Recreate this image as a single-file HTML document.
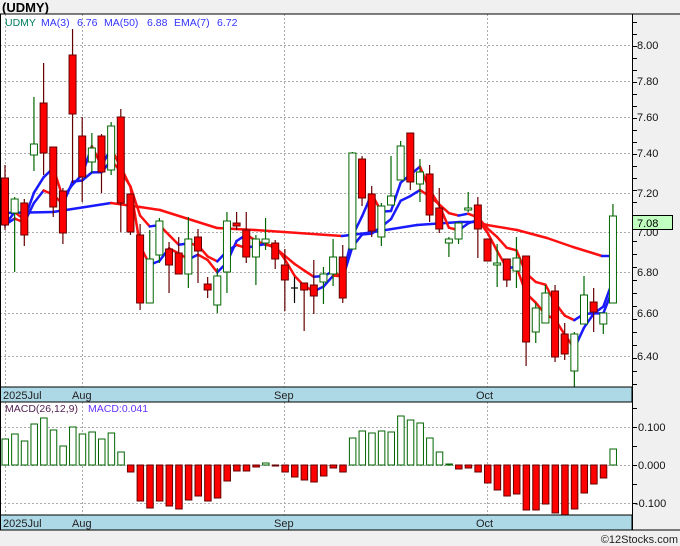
<!DOCTYPE html>
<html><head><meta charset="utf-8"><style>
html,body{margin:0;padding:0;background:#f0f0f0;width:680px;height:546px;overflow:hidden}
svg{display:block;font-family:"Liberation Sans",sans-serif}
</style></head><body>
<svg id="s" width="680" height="546" xmlns="http://www.w3.org/2000/svg">
<rect x="0" y="0" width="680" height="546" fill="#f0f0f0"/>
<rect x="0" y="14" width="632" height="516" fill="#fff"/>
<text x="2" y="12" font-size="13" font-weight="bold" fill="#000">(UDMY)</text>
<g id="grid"></g>
<g id="lines"></g>
<g id="candles"></g>
<g id="macd"></g>
<rect x="0" y="387" width="632" height="15" fill="#add8e6" stroke="#000" stroke-width="1"/>
<rect x="0" y="515" width="632" height="15" fill="#add8e6" stroke="#000" stroke-width="1"/>
<g font-size="11" fill="#222">
<text x="3" y="399">2025Jul</text><text x="72" y="399">Aug</text><text x="274" y="399">Sep</text><text x="476" y="399">Oct</text>
<text x="3" y="527">2025Jul</text><text x="72" y="527">Aug</text><text x="274" y="527">Sep</text><text x="476" y="527">Oct</text>
</g>
<line x1="0" y1="14" x2="680" y2="14" stroke="#000"/>
<line x1="0.5" y1="14" x2="0.5" y2="530" stroke="#000"/>
<line x1="632.5" y1="14" x2="632.5" y2="530" stroke="#000"/>
<line x1="632" y1="530" x2="680" y2="530" stroke="#000"/>
<g id="axis" font-size="11" fill="#111"></g>
<g font-size="10.5">
<text x="5" y="26" fill="#008060">UDMY</text>
<text x="41" y="26" fill="#3333ff">MA(3)</text>
<text x="77" y="26" fill="#3333ff">6.76</text>
<text x="104" y="26" fill="#3333ff">MA(50)</text>
<text x="147" y="26" fill="#3333ff">6.88</text>
<text x="174" y="26" fill="#3333ff">EMA(7)</text>
<text x="217" y="26" fill="#3333ff">6.72</text>
</g>
<text x="5" y="412" font-size="10.5" fill="#552255">MACD(26,12,9)</text>
<text x="88" y="412" font-size="10.5" fill="#6633ff">MACD:0.041</text>
<rect x="632.5" y="215.5" width="40" height="14" fill="#c0ffc0" stroke="#000"/>
<text x="637" y="227" font-size="11" fill="#000">7.08</text>
<text x="678" y="543" font-size="11" fill="#222" text-anchor="end">©12Stocks.com</text>
</svg>
<script>
var NS="http://www.w3.org/2000/svg";
function el(p,t,a){var e=document.createElementNS(NS,t);for(var k in a)e.setAttribute(k,a[k]);document.getElementById(p).appendChild(e);return e;}
var gy=[45,81,117,153,193,232,272,313,356],lb=["8.00","7.80","7.60","7.40","7.20","7.00","6.80","6.60","6.40"];
gy.forEach(function(y,i){el("grid","line",{x1:0,y1:y+.5,x2:632,y2:y+.5,stroke:"#aaa","stroke-dasharray":"2,2"});
var t=el("axis","text",{x:637,y:y+4});t.textContent=lb[i];});
for(var y=22;y<387;y+=(y<200?12:13)){el("axis","line",{x1:632,y1:y+.5,x2:637,y2:y+.5,stroke:"#000"});}
[427,465,503].forEach(function(y,i){el("grid","line",{x1:0,y1:y+.5,x2:632,y2:y+.5,stroke:"#aaa","stroke-dasharray":"2,2"});
var t=el("axis","text",{x:i==2?635:638,y:y+4});t.textContent=["0.100","0.000","-0.100"][i];});
for(var y=408;y<515;y+=19)el("axis","line",{x1:632,y1:y+.5,x2:637,y2:y+.5,stroke:"#000"});
[5,82,284,487].forEach(function(x){el("grid","line",{x1:x+.5,y1:14,x2:x+.5,y2:530,stroke:"#aaa","stroke-dasharray":"2,2"});});
var C=[[178,225,165,230,"r"],[199,213,197,272,"g"],[203,235,199,246,"r"],[144,155,97,171,"g"],[103,153,63,175,"r"],[147,207,147,217,"r"],[191,233,188,244,"r"],[55,114,29,183,"r"],[136,177,117,202,"r"],[148,162,133,173,"g"],[136,172,134,193,"r"],[126,170,122,175,"g"],[117,203,109,232,"r"],[194,232,194,235,"r"],[235,303,224,310,"r"],[259,303,230,303,"g"],[221,255,218,263,"g"],[249,265,242,293,"r"],[253,274,237,274,"r"],[239,274,217,288,"g"],[237,251,229,283,"r"],[284,290,277,298,"r"],[276,305,268,313,"g"],[221,272,212,293,"g"],[223,226,212,230,"r"],[230,257,212,263,"r"],[239,257,235,285,"g"],[239,243,218,250,"g"],[243,259,240,269,"r"],[265,280,249,311,"r"],[288,288,277,303,"k"],[283,290,283,331,"r"],[285,296,260,314,"r"],[274,282,267,304,"g"],[257,274,239,286,"g"],[257,298,245,303,"r"],[153,249,152,249,"g"],[159,198,156,206,"r"],[194,231,186,237,"r"],[206,237,203,246,"g"],[196,205,156,205,"g"],[146,180,141,180,"g"],[133,182,133,190,"r"],[172,184,159,202,"g"],[174,215,165,222,"r"],[208,229,188,233,"r"],[239,243,237,257,"g"],[223,239,222,244,"g"],[208,209,192,212,"g"],[205,229,197,258,"r"],[239,261,239,261,"r"],[263,265,244,287,"g"],[259,280,259,287,"r"],[258,271,237,288,"g"],[256,342,256,366,"r"],[308,332,303,343,"g"],[293,323,285,323,"g"],[291,357,285,362,"r"],[334,354,323,360,"r"],[334,371,332,387,"g"],[295,324,276,324,"g"],[302,312,288,332,"r"],[313,324,313,334,"g"],[216,303,204,303,"g"]];
function X(i){return 5+i*9.65;}
var closes=C.map(function(c){return c[4]=="g"?c[0]:c[1];});
function seg(pts,w){for(var i=1;i<pts.length;i++){var a=pts[i-1],b=pts[i];
el("lines","line",{x1:a[0],y1:a[1],x2:b[0],y2:b[1],stroke:b[1]>a[1]?"#ff1010":"#1a1aff","stroke-width":w,"stroke-linecap":"round"});}}
seg([[5,213],[53,212],[111,203],[140,207],[160,210],[217,228],[255,230],[342,236],[367,233],[417,225],[460,222],[476,222],[487,225],[517,230],[547,238],[573,247],[602,256],[611,256]],2.5);
var ma=[],em=[],e=closes[0];
for(var i=0;i<C.length;i++){var a=closes.slice(Math.max(0,i-2),i+1);ma.push([X(i),a.reduce(function(s,v){return s+v;},0)/a.length]);
e=i==0?closes[0]:e+(closes[i]-e)*0.25;em.push([X(i),e]);}
seg(ma,2.5);seg(em,2.5);
C.forEach(function(c,i){var x=X(i),g=c[4]=="g",k=c[4]=="k";
var wc=g?"#006600":(k?"#000":"#660000");
el("candles","line",{x1:x,y1:c[2],x2:x,y2:c[3],stroke:wc,"stroke-width":1.2});
if(k){el("candles","line",{x1:x-3.5,y1:c[0],x2:x+3.5,y2:c[0],stroke:"#000","stroke-width":1.2});return;}
el("candles","rect",{x:x-3.5,y:c[0],width:7,height:Math.max(2,c[1]-c[0]),fill:g?"#fff":"#ff0000",stroke:g?"#006600":"#660000","stroke-width":1});});
var M=[26,31,24,41,47,35,19,38,31,33,26,32,13,-7,-36,-43,-36,-41,-44,-35,-31,-36,-33,-16,-6,-6,-2,2,-1,-7,-12,-15,-17,-11,-3,-7,27,34,32,34,33,49,45,42,27,13,1,-4,-3,-7,-18,-25,-31,-29,-45,-45,-39,-48,-50,-44,-28,-19,-13,16];
M.forEach(function(v,i){var x=X(i)-3,g=v>0;var h=Math.abs(v);
el("macd","rect",{x:x,y:g?465-h:465,width:6.5,height:Math.max(1,h),fill:g?"#fff":"#ff0000",stroke:g?"#006600":"#660000","stroke-width":1});});
</script>
</body></html>
